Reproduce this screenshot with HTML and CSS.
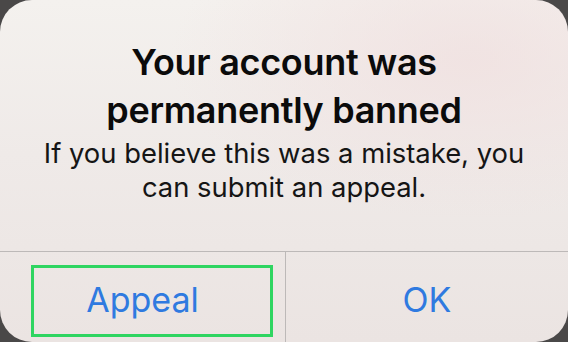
FILE: index.html
```html
<!DOCTYPE html>
<html>
<head>
<meta charset="utf-8">
<link rel="stylesheet" href="styles.css">
</head>
<body>
<div class="alert">
  <div class="content">
    <h1 class="title">Your account was<br>permanently banned</h1>
    <p class="message">If you believe this was a mistake, you<br>can submit an appeal.</p>
  </div>
  <div class="actions">
    <div class="action">Appeal<span class="highlight"></span></div>
    <div class="action">OK</div>
  </div>
</div>
</body>
</html>
```
FILE: styles.css
```css
html, body {
  margin: 0;
  padding: 0;
  width: 568px;
  height: 342px;
  background: #4a4848;
  overflow: hidden;
}
.alert {
  width: 568px;
  height: 342px;
  border-radius: 32px;
  overflow: hidden;
  display: flex;
  flex-direction: column;
  background:
    radial-gradient(ellipse 300px 160px at 470px 60px, rgba(240, 222, 222, 0.7), rgba(240, 222, 222, 0) 100%),
    linear-gradient(180deg, #f4f1ee 0%, #efeae8 45%, #ebe4e2 100%);
  font-family: Inter, "Noto Sans", sans-serif;
  color: #0b0b0b;
}
.content {
  height: 251px;
  box-sizing: border-box;
  padding-top: 38px;
  text-align: center;
}
.title {
  margin: 0;
  font-size: 36px;
  font-weight: 600;
  line-height: 48px;
  letter-spacing: -0.3px;
}
.message {
  margin: 0;
  margin-top: 2px;
  font-size: 27.4px;
  font-weight: 400;
  line-height: 34px;
  color: #151515;
}
.actions {
  flex: 1;
  display: grid;
  grid-template-columns: 285px 1fr;
  border-top: 1px solid #bdb9b8;
}
.action {
  position: relative;
  display: flex;
  align-items: center;
  justify-content: center;
  padding-top: 4px;
  font-size: 34px;
  color: #2f7ae0;
}
.action + .action {
  border-left: 1px solid #bdb9b8;
}
.highlight {
  position: absolute;
  left: 31px;
  top: 13px;
  box-sizing: border-box;
  width: 242px;
  height: 72px;
  border: 3px solid #2fd561;
}
```
